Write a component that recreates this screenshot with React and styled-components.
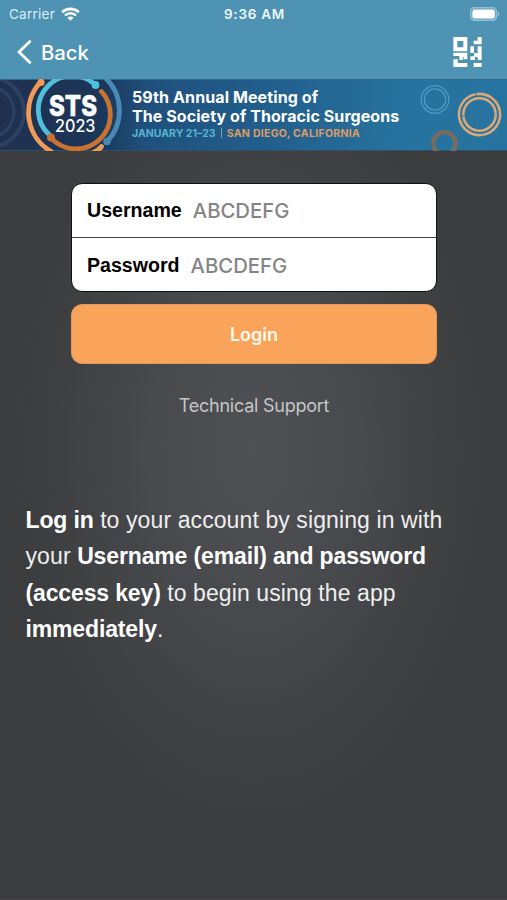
import React from "react";
import styled, { createGlobalStyle } from "styled-components";

const GlobalStyle = createGlobalStyle`
  * {
    box-sizing: border-box;
  }

  body {
    margin: 0;
    background: #3a3b3d;
    font-family: Inter, "Liberation Sans", sans-serif;
  }
`;

const WifiIcon = () => (
  <svg width="19" height="14" viewBox="0 0 19 14" fill="none">
    <path d="M1.2 5.3a12 12 0 0 1 16.6 0" stroke="#fff" strokeWidth="2.7" />
    <path d="M4 8.5a7.7 7.7 0 0 1 11 0" stroke="#fff" strokeWidth="2.5" />
    <path d="M6.4 10.8a4.4 4.4 0 0 1 6.200 0L9.500 13.800z" fill="#fff" />
  </svg>
);

const BatteryIcon = () => (
  <svg width="30" height="14" viewBox="0 0 30 14">
    <rect x="0.6" y="0.6" width="26" height="12.8" rx="4" fill="#6ba6c2" stroke="#93c0d5" strokeWidth="1.2" />
    <rect x="2.4" y="2.5" width="22.4" height="9" rx="2.2" fill="#fff" />
    <path d="M28 4.8c1.6.7 1.6 3.7 0 4.4z" fill="#a5cadb" />
  </svg>
);

const BackIcon = () => (
  <svg width="15" height="24" viewBox="0 0 15 24" fill="none">
    <path d="M12.8 1.6 2 12l10.800 10.400" stroke="#fff" strokeWidth="2.8" strokeLinecap="round" strokeLinejoin="round" />
  </svg>
);

const ScanIcon = () => (
  <svg width="29" height="30" viewBox="0 0 85 90" fill="#fff">
    <path fillRule="evenodd" d="M0 0h42v43H0zM12 12v19h18V12z" />
    <path d="M73 0h12v22H61V11h12z" />
    <path d="M51 28h11v20H51zM73 28h12v41H73v-9h-8v9H51V58h11V48h11z" />
    <path d="M0 47h42v20H31v-7h-2v9H18V57H0z" />
    <path d="M0 67h13v11h29v12H0z" />
    <path d="M61 78h24v12H61z" />
  </svg>
);

// Ring artwork behind the banner text
const BannerArt = () => (
  <ArtSvg viewBox="0 0 507 72" fill="none">
    <g stroke="#3b5878" opacity="0.45">
      <circle cx="-11" cy="33" r="35" strokeWidth="4" />
      <circle cx="-11" cy="33" r="25" strokeWidth="3" />
    </g>
    <g strokeWidth="4.8" strokeLinecap="round">
      <path d="M40 3.5A45 45 0 0 0 52 73" stroke="#f09a55" />
      <path d="M94 73Q99 71 101.5 67.5" stroke="#f09a55" />
      <path d="M104.5 -2A45 45 0 0 1 106.5 63" stroke="#4889b5" />
      <path d="M95.5 6A33.5 33.5 0 0 0 49 55.5" stroke="#4fbfdb" />
      <path d="M50.5 58.5A33.5 33.5 0 0 0 101.5 12.5" stroke="#ca7230" />
    </g>
    <circle cx="41" cy="3.5" r="3.6" fill="#f09a55" />
    <circle cx="107" cy="62.5" r="3.8" fill="#4889b5" />
    <circle cx="95.5" cy="6" r="3.9" fill="#4fbfdb" />
    <circle cx="51" cy="58.5" r="3.9" fill="#ca7230" />
    <text x="49" y="36.8" textLength="48" lengthAdjust="spacingAndGlyphs" fill="#fff" stroke="#fff" strokeWidth="0.5" fontFamily="Inter, sans-serif" fontWeight="800" fontSize="28.5">
      STS
    </text>
    <text x="55" y="53" textLength="40.5" lengthAdjust="spacingAndGlyphs" fill="#fff" fontFamily="Inter, sans-serif" fontWeight="500" fontSize="17">
      2023
    </text>
    <g stroke="#4b9bc2" strokeWidth="1.3">
      <circle cx="435" cy="20.5" r="13.8" />
      <circle cx="435" cy="20.5" r="10.7" />
    </g>
    <circle cx="444.5" cy="64.5" r="11.3" stroke="#766c61" strokeWidth="4.6" />
    <g stroke="#dca878" strokeWidth="2.5">
      <circle cx="479.5" cy="35.5" r="20.6" strokeDasharray="63.7 1" transform="rotate(80 479.5 35.5)" />
      <circle cx="479.5" cy="35.5" r="16.2" strokeDasharray="49.9 1" transform="rotate(-4 479.5 35.5)" />
    </g>
  </ArtSvg>
);

const fields = [
  { name: "username", label: "Username", type: "text" },
  { name: "password", label: "Password", type: "password" },
];

const App = () => (
  <>
    <GlobalStyle />
    <Screen>
      <TopBar>
        <StatusBar>
          <Carrier>
            Carrier
            <WifiIcon />
          </Carrier>
          <Clock>9:36 AM</Clock>
          <Battery>
            <BatteryIcon />
          </Battery>
        </StatusBar>
        <NavBar>
          <BackButton type="button">
            <BackIcon />
            Back
          </BackButton>
          <ScanButton type="button" aria-label="Scan code">
            <ScanIcon />
          </ScanButton>
        </NavBar>
      </TopBar>

      <Banner>
        <BannerArt />
        <BannerText>
          <BannerLine spacing="0.1px">59th Annual Meeting of</BannerLine>
          <BannerLine spacing="0.07px">The Society of Thoracic Surgeons</BannerLine>
          <BannerMeta>
            <Dates>JANUARY 21–23</Dates>
            <Separator />
            <Place>SAN DIEGO, CALIFORNIA</Place>
          </BannerMeta>
        </BannerText>
      </Banner>

      <Content>
        <Fields>
          {fields.map((field) => (
            <Field key={field.name}>
              <FieldLabel htmlFor={field.name}>{field.label}</FieldLabel>
              <FieldInput id={field.name} type={field.type} placeholder="ABCDEFG" />
            </Field>
          ))}
        </Fields>
        <LoginButton type="button">Login</LoginButton>
        <SupportLink>Technical Support</SupportLink>
        <Instructions>
          <b>Log in</b> to your account by signing in with
          <br />
          your <b>Username (email) and password</b>
          <br />
          <b>(access key)</b> to begin using the app
          <br />
          <b>immediately</b>.
        </Instructions>
      </Content>
    </Screen>
  </>
);

export default App;

// Styled Components
const Screen = styled.div`
  display: flex;
  flex-direction: column;
  width: 507px;
  height: 900px;
  overflow: hidden;
  border-bottom: 1px solid #4a4244;
  background:
    repeating-linear-gradient(0deg, rgba(0, 0, 0, 0.015) 0 1px, transparent 1px 4px),
    radial-gradient(ellipse 250px 400px at 253px 450px, #505155 0%, #4a4b4f 35%, #404143 75%, #3b3c3e 100%);
`;

const TopBar = styled.header`
  flex: none;
  height: 79px;
  background: #4e93b4;
  color: #fff;
`;

const StatusBar = styled.div`
  display: grid;
  grid-template-columns: 1fr auto 1fr;
  align-items: center;
  height: 27px;
  padding: 0 7px 0 9px;
`;

const Carrier = styled.div`
  display: flex;
  align-items: center;
  gap: 6px;
  font-size: 13.5px;
  letter-spacing: 0.25px;
  color: #dcedf5;
`;

const Clock = styled.div`
  font-size: 13.5px;
  font-weight: 600;
  letter-spacing: 0.75px;
  color: #eef8fc;
`;

const Battery = styled.div`
  display: flex;
  justify-content: flex-end;
`;

const NavBar = styled.nav`
  display: flex;
  align-items: center;
  justify-content: space-between;
  height: 50px;
  padding: 0 25px 0 17px;
`;

const BackButton = styled.button`
  display: flex;
  align-items: center;
  gap: 9px;
  padding: 0;
  border: 0;
  background: none;
  color: #fff;
  font: 550 20.3px Inter, sans-serif;
`;

const ScanButton = styled.button`
  display: flex;
  padding: 0;
  border: 0;
  background: none;
`;

const Banner = styled.section`
  position: relative;
  flex: none;
  height: 72px;
  padding: 8px 0 0 132px;
  border-top: 1px solid #2d668d;
  border-bottom: 1px solid #2f5068;
  background: linear-gradient(95deg, #21304f 0%, #1b3659 20%, #1f507d 29%, #22608e 55%, #27739f 80%, #26749f 100%);
`;

const ArtSvg = styled.svg`
  position: absolute;
  top: -1px;
  left: 0;
  width: 507px;
  height: 72px;
`;

const BannerText = styled.div`
  position: relative;
  color: #fff;
`;

const BannerLine = styled.div`
  font-size: 16px;
  font-weight: 700;
  line-height: 19px;
  letter-spacing: ${(props) => props.spacing};
  white-space: nowrap;
`;

const BannerMeta = styled.div`
  display: flex;
  align-items: center;
  height: 14px;
  font-size: 10.5px;
  font-weight: 700;
  white-space: nowrap;
`;

const Dates = styled.span`
  color: #56b5d4;
`;

const Separator = styled.span`
  width: 1px;
  height: 10px;
  margin: 0 5px;
  background: #76a0b8;
`;

const Place = styled.span`
  letter-spacing: 0.3px;
  color: #dd9c66;
`;

const Content = styled.main`
  display: flex;
  flex-direction: column;
  padding: 32px 70px 0 71px;
`;

const Fields = styled.form`
  height: 109px;
  border: 1.5px solid #111;
  border-radius: 11px;
  background: #fff;
  overflow: hidden;
`;

const Field = styled.div`
  display: flex;
  align-items: center;
  gap: 11px;
  height: 53px;
  padding-left: 15px;

  & + & {
    height: 55px;
    border-top: 1px solid #444;
  }
`;

const FieldLabel = styled.label`
  color: #000;
  font: bold 19.6px "Liberation Sans", sans-serif;
`;

const FieldInput = styled.input`
  width: 200px;
  padding: 0;
  border: 0;
  outline: 0;
  background: none;
  font: 450 20.3px Inter, sans-serif;

  &::placeholder {
    color: #858585;
    opacity: 1;
  }
`;

const LoginButton = styled.button`
  height: 60px;
  margin-top: 12px;
  padding: 0;
  border: 1px solid #e2995b;
  border-radius: 11px;
  background: #f9a35b;
  color: #fff8ee;
  font: 600 18px Inter, sans-serif;
`;

const SupportLink = styled.a`
  align-self: center;
  margin-top: 31px;
  color: #c6c6c8;
  font-size: 18px;
  line-height: 22px;
  letter-spacing: -0.25px;
`;

const Instructions = styled.p`
  margin: 85px -60px 0 -45.5px;
  color: #eee;
  font-family: "Liberation Sans", sans-serif;
  font-size: 23px;
  line-height: 36.3px;
  letter-spacing: 0.1px;
  white-space: nowrap;

  b {
    color: #fff;
    letter-spacing: -0.14px;
  }
`;
